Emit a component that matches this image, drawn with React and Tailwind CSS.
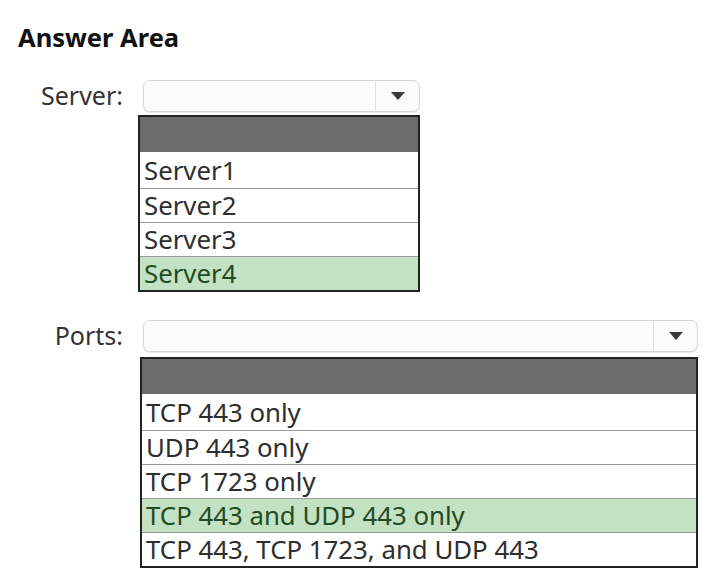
export default function App() {
  const Arrow = () => (
    <svg width="16" height="10" viewBox="0 0 16 10" className="block">
      <path d="M1 1 L15 1 L8 9 Z" fill="#3a3a3a" />
    </svg>
  );
  const Select = ({ width }) => (
    <div
      className="flex h-[32px] rounded-[7px] border border-[#d4d4d4] bg-[#fbfbfb] shadow-[0_1px_1px_rgba(0,0,0,0.08)]"
      style={{ width }}
    >
      <div className="flex-1" />
      <div className="flex w-[44px] items-center justify-center border-l border-[#dedede]">
        <Arrow />
      </div>
    </div>
  );
  const List = ({ items, selected, className }) => (
    <div className={"border-2 border-[#222] bg-white " + className}>
      <div className="h-[35px] bg-[#6c6c6c]" />
      {items.map((t, i) => (
        <div
          key={t}
          className={
            "flex items-center pl-[4px] pt-[1px] text-[25.8px] leading-none text-[#2e2e2e] " +
            (i > 0 ? "h-[34px] border-t border-[#9a9a9a] " : "h-[36px] ") +
            (t === selected ? "bg-[#c3e2c3] text-[#244a24]" : "")
          }
        >
          {t}
        </div>
      ))}
    </div>
  );
  return (
    <div
      className="h-[588px] w-[718px] bg-white pl-[18px] pt-[21px]"
      style={{ fontFamily: '"Noto Sans", "Open Sans", sans-serif' }}
    >
      <h1 className="text-[25.5px] font-bold leading-[32px] text-[#111]">Answer Area</h1>
      <div className="mt-[27px] flex">
        <div className="w-[105px] text-right text-[25px] leading-[30px] text-[#333]">Server:</div>
        <div className="ml-[20px]">
          <Select width={277} />
          <List
            className="-ml-[5px] mt-[3px] w-[282px]"
            items={["Server1", "Server2", "Server3", "Server4"]}
            selected="Server4"
          />
        </div>
      </div>
      <div className="mt-[28px] flex">
        <div className="w-[105px] text-right text-[25px] leading-[30px] text-[#333]">Ports:</div>
        <div className="ml-[20px]">
          <Select width={555} />
          <List
            className="-ml-[3px] mt-[5px] w-[558px]"
            items={[
              "TCP 443 only",
              "UDP 443 only",
              "TCP 1723 only",
              "TCP 443 and UDP 443 only",
              "TCP 443, TCP 1723, and UDP 443",
            ]}
            selected="TCP 443 and UDP 443 only"
          />
        </div>
      </div>
    </div>
  );
}
